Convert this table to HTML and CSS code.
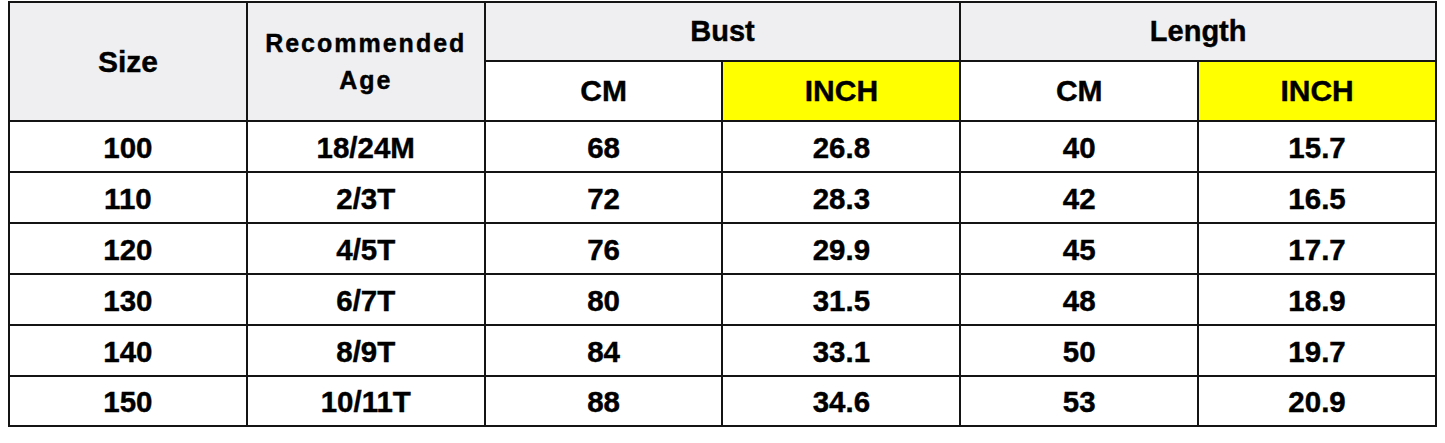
FILE: index.html
```html
<!DOCTYPE html>
<html lang="en">
<head>
<meta charset="utf-8">
<title>Size Chart</title>
<link rel="stylesheet" href="styles.css">
</head>
<body>
<table class="chart">
  <colgroup>
    <col class="c"><col class="c"><col class="c"><col class="c"><col class="c"><col class="c">
  </colgroup>
  <thead>
    <tr class="h1">
      <th rowspan="2" class="gray size">Size</th>
      <th rowspan="2" class="gray age">Recommended<br>Age</th>
      <th colspan="2" class="gray group">Bust</th>
      <th colspan="2" class="gray group">Length</th>
    </tr>
    <tr class="h2">
      <th class="unit">CM</th>
      <th class="unit yellow">INCH</th>
      <th class="unit">CM</th>
      <th class="unit yellow">INCH</th>
    </tr>
  </thead>
  <tbody>
    <tr><td>100</td><td>18/24M</td><td>68</td><td>26.8</td><td>40</td><td>15.7</td></tr>
    <tr><td>110</td><td>2/3T</td><td>72</td><td>28.3</td><td>42</td><td>16.5</td></tr>
    <tr><td>120</td><td>4/5T</td><td>76</td><td>29.9</td><td>45</td><td>17.7</td></tr>
    <tr><td>130</td><td>6/7T</td><td>80</td><td>31.5</td><td>48</td><td>18.9</td></tr>
    <tr><td>140</td><td>8/9T</td><td>84</td><td>33.1</td><td>50</td><td>19.7</td></tr>
    <tr class="last"><td>150</td><td>10/11T</td><td>88</td><td>34.6</td><td>53</td><td>20.9</td></tr>
  </tbody>
</table>
</body>
</html>
```
FILE: styles.css
```css
html, body {
  background: #ffffff;
}
body {
  margin: 1px 0 0 8px;
  font-family: "Liberation Sans", Arial, sans-serif;
  color: #000;
}
.chart {
  border-collapse: collapse;
  table-layout: fixed;
  width: 1429px;
  border: 2px solid #141414;
}
.chart th,
.chart td {
  border: 2px solid #141414;
  text-align: center;
  vertical-align: middle;
  padding: 0;
  font-weight: bold;
  -webkit-text-stroke: 0.4px #000;
}
.chart td {
  font-size: 29.5px;
  height: 47px;
  background: #fff;
  padding-top: 2px;
}
.chart tr.last td {
  height: 46px;
}
.h1 th {
  height: 57px;
}
.h2 th {
  height: 58px;
}
.gray {
  background: #efeff1;
}
.size {
  font-size: 30px;
}
.age {
  font-size: 25px;
  letter-spacing: 2px;
  line-height: 37px;
  padding-bottom: 2px;
}
.group {
  font-size: 29px;
}
.unit {
  font-size: 30px;
  background: #fff;
}
.unit.yellow {
  background: #ffff00;
}
```
